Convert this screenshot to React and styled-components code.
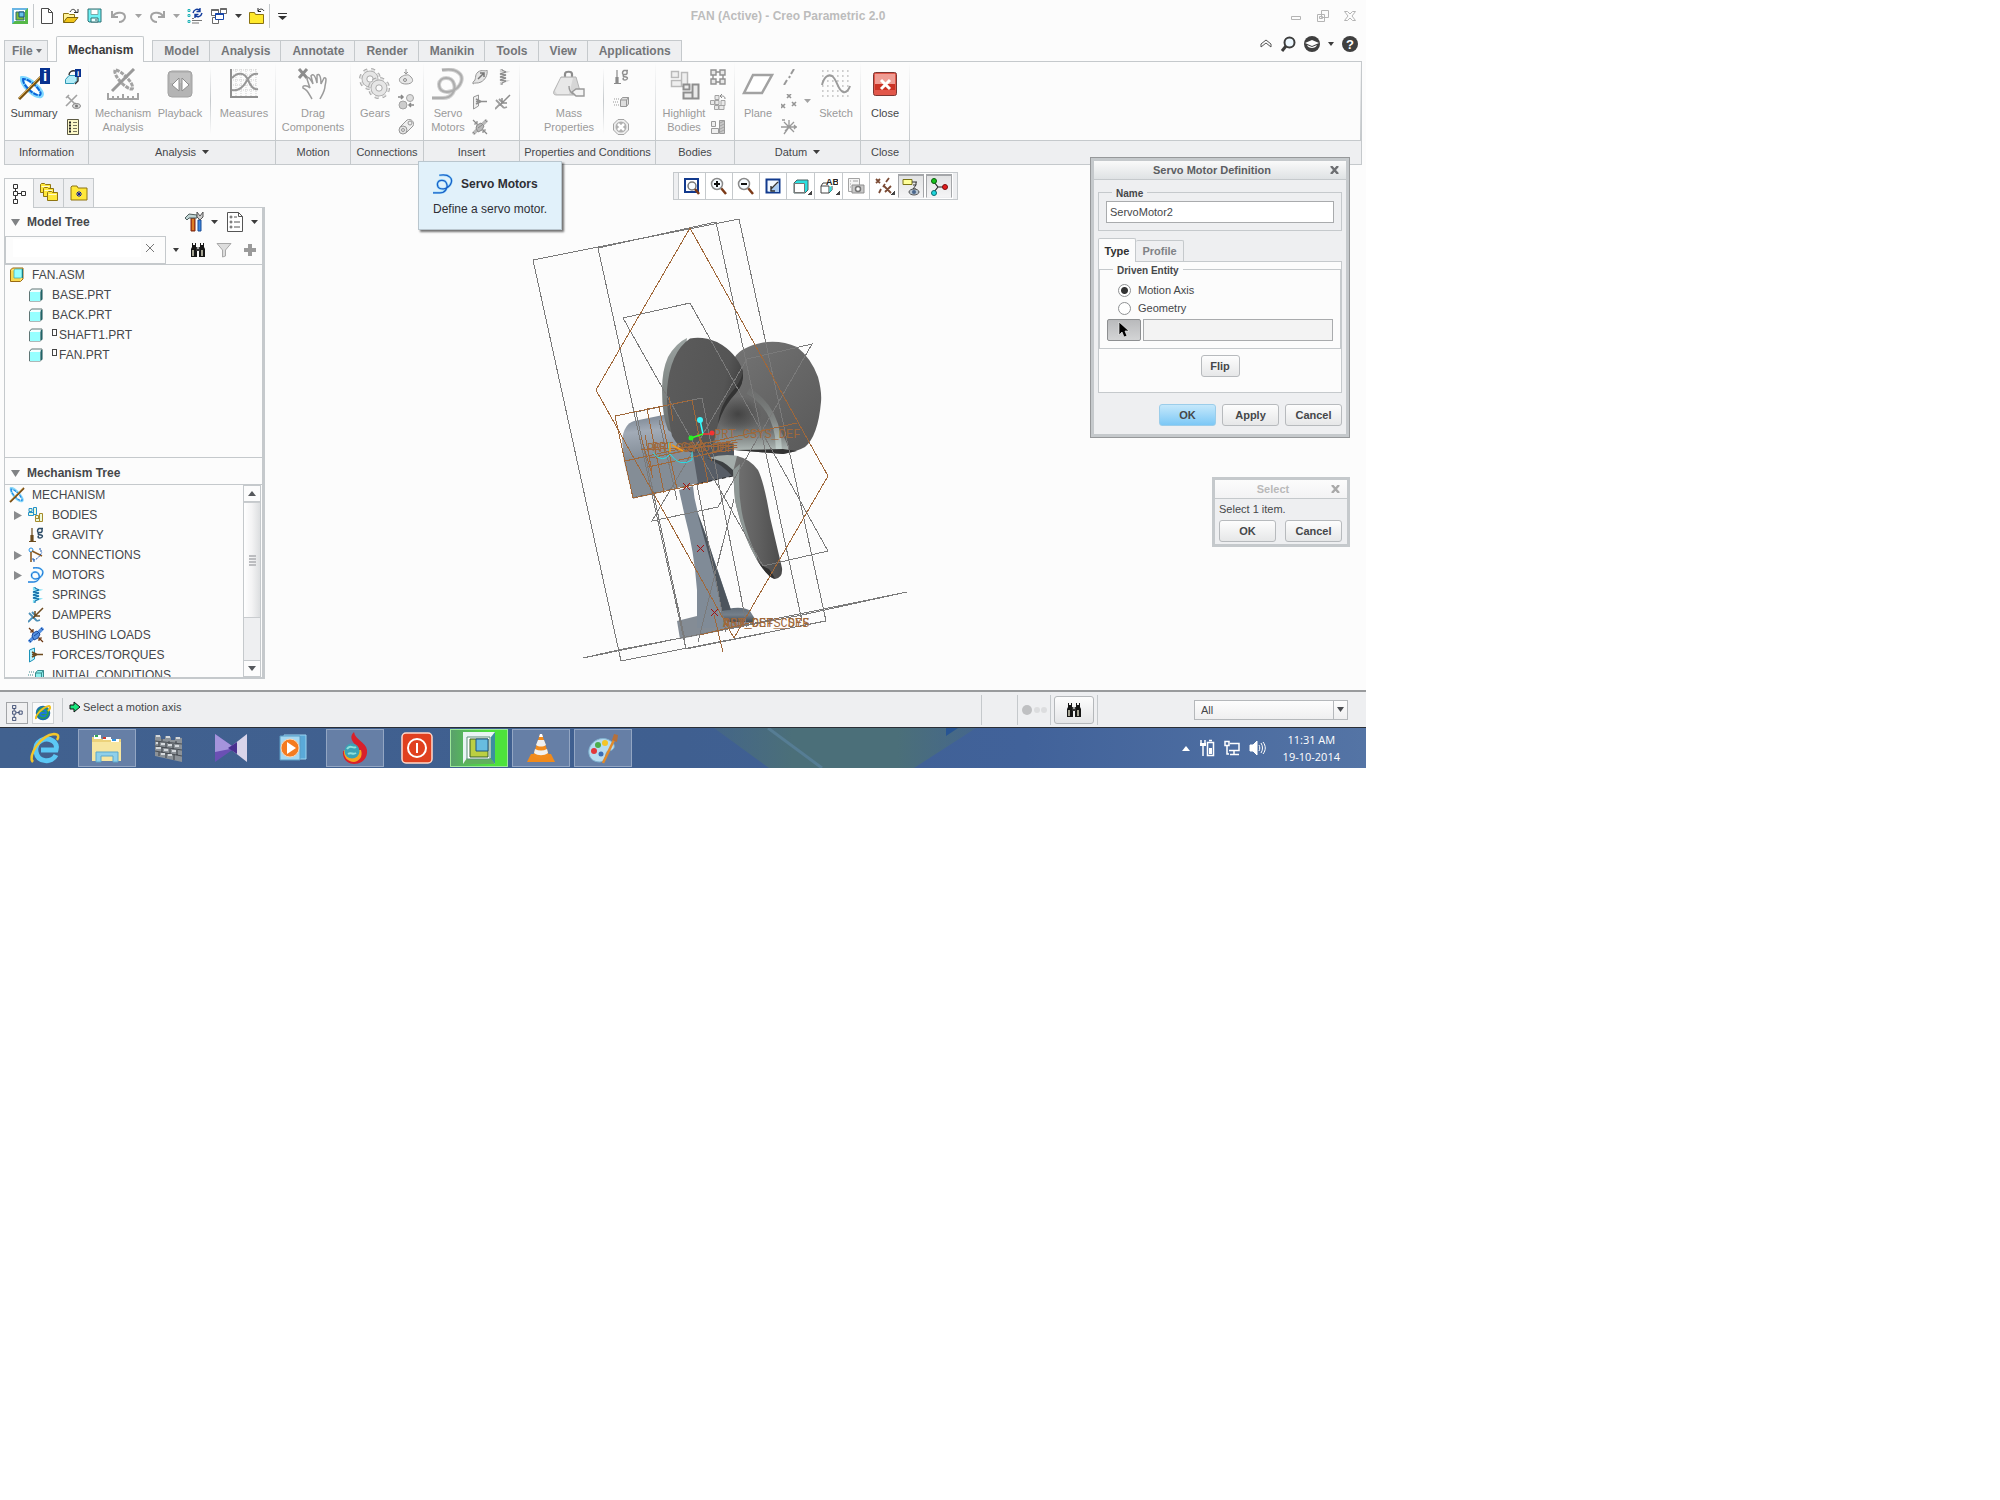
import React, { useState } from "react";
import styled, { createGlobalStyle, css } from "styled-components";

const cores = {
    fundo: "#fcfcfc",
    faixa: "#eeeff1",
    linha: "#c5c9cc",
    texto: "#45474a",
    apagado: "#9a9a9a",
    cinza: "#a3a3a3",
};

const GlobalStyle = createGlobalStyle`
    * { box-sizing: border-box; }
    body {
        margin: 0;
        background: #ffffff;
        font-family: "Liberation Sans", Arial, sans-serif;
        font-size: 11px;
        color: ${cores.texto};
    }
    button, input, select { font: inherit; color: inherit; }
    button { border: 0; padding: 0; background: none; }
    ul { list-style: none; margin: 0; padding: 0; }
    svg { display: block; flex: none; }
`;

/* ---------- icons ---------- */

const Icone = ({ s = 16, children, ...resto }) => (
    <svg width={s} height={s} viewBox={`0 0 ${s} ${s}`} fill="none" stroke={cores.cinza} {...resto}>
        {children}
    </svg>
);

const Seta = ({ cor = "#3c3c3c", w = 7, h = 4 }) => (
    <svg width={w} height={h} viewBox="0 0 7 4" preserveAspectRatio="none"><path d="M0 0H7L3.5 4Z" fill={cor} /></svg>
);

const Binoculo = ({ s = 16 }) => (
    <svg width={s} height={s} viewBox="0 0 16 16">
        <path d="M2 1h1v2h2V1h1v4h1v10H1V7l1-2ZM10 1h1v2h2V1h1v4l1 2v8H9V5h1Z" fill="#161616" />
        <path d="M6 5h4v4H6Z" fill="#333" />
        <path d="M3 8v6M12 8v6" stroke="#d3d2bd" strokeWidth="1.500" />
        <path d="M7 5l2 2M9 5L7 7" stroke="#bbb" strokeWidth="0.8" />
    </svg>
);

const Espiral = ({ s = 32, a = "#adadad", b = "#d0d0d0" }) => {
    const d = "M0 30H11C20 30 24 22 22 16C20 8 8 8 7 16C7 24 14 25 20 23C30 19 32 9 27 5C23 1 16 1 10 2";
    return (
        <svg width={s} height={s} viewBox="0 0 32 32" fill="none">
            <path d={d} stroke={b} strokeWidth="4" />
            <path d={d} stroke={a} strokeWidth="2" />
        </svg>
    );
};

const Mecanismo = ({ s = 16, cor = "#1f8ae6", claro = "#8cd8f7", eixo = "#7b4d14" }) => (
    <svg width={s} height={s} viewBox="0 0 16 16" fill="none">
        <path d="M2 1C1 6 9 15 13 14C16 12 6 1 2 1Z" stroke={claro} strokeWidth="2.4" />
        <path d="M2 2C2 7 9 14 13 13.500C14 11 6 2 2 2Z" stroke={cor} strokeWidth="1.200" strokeDasharray="3 1" />
        <path d="M1 15L15 1" stroke={eixo} strokeWidth="1.900" />
        <path d="M1 14L14 1" stroke="#d8b45c" strokeWidth="0.6" />
    </svg>
);

const Letra = ({ children, ...p }) => (
    <text stroke="none" fontFamily="Liberation Sans, Arial, sans-serif" fontWeight="bold" {...p}>{children}</text>
);

const Peca = () => (
    <Icone s={14}>
        <path d="M.5 3.500L2.500 1h10.500v10l-1.500 2H.5Z" fill="#f4ffff" stroke="#5f7575" />
        <path d="M1 4h10v9H1Z" fill="#96ffff" stroke="none" />
        <path d="M11.500 3.500V13" stroke="#7fa5a5" />
        <path d="M12.500 2v10" stroke="#1f6468" strokeWidth="1.500" />
    </Icone>
);

const Montagem = () => (
    <Icone s={16}>
        <path d="M1.500 3L3.500 1H14v11l-2.500 2.500h-10Z" fill="#ffe169" stroke="#9a6a12" />
        <path d="M2 4h3v7h6v3H2Z" fill="#f9d94e" stroke="none" />
        <path d="M5 3L6.500 2H13v8l-1.500 1H5Z" fill="#96ffff" stroke="#3aa6a6" strokeWidth="0.7" />
        <path d="M13.500 2v9" stroke="#1b7b84" />
    </Icone>
);

const Arvore = ({ cor = "#333", s = 16 }) => (
    <Icone s={s} stroke={cor} viewBox="0 0 16 20">
        <path d="M4.500 4v3M4.500 12v3M7 9.500h4M2.500.5h4v4h-4ZM2.500 7.500h4v4h-4ZM2.500 15.500h4v4h-4ZM10.500 7.500h4v4h-4Z" />
    </Icone>
);

const Pasta = ({ x = 0, y = 0 }) => (
    <g transform={`translate(${x} ${y})`}>
        <path d="M.5 9.500V1.500l1-1h3l1 1h5v8Z" fill="#ffe83a" stroke="#8f7411" />
        <path d="M1.500 3.500h8" stroke="#fffbd0" />
    </g>
);

const Mola = ({ cor, claro }) => (
    <Icone s={16}>
        <path d="M6 0v2l5 1-6 2 6 1-6 2 6 1-6 2 6 1-5 2v2" stroke={claro} strokeWidth="2.200" />
        <path d="M7 0v1l4 2-6 2 6 1-6 2 6 1-6 2 6 1-4 2v2" stroke={cor} />
    </Icone>
);

const Gravidade = ({ a, b }) => (
    <Icone s={16}>
        <path d="M4 1v13M1 14.500h7M3 8v6M5 8v6" stroke={a} strokeWidth="1.200" />
        <path d="M15 1.500h-4c-2 1-2 4 0 4h2c2-1 1-4 0-4M11 6c-2 1 0 2 2 2s2 3-1 3-2-2-1-2" stroke={b} strokeWidth="1.500" />
    </Icone>
);

const Amortecedor = ({ a, b }) => (
    <Icone s={16}>
        <path d="M0 15L5 10M2 7l7 7M4 5l4 4M2 7l-1-1M9 14l3-1" stroke={a} strokeWidth="1.800" />
        <path d="M5 11l3-3L15 1M7 4v5h5" stroke={b} strokeWidth="1.500" />
    </Icone>
);

const Bucha = ({ a, b, c }) => (
    <Icone s={16}>
        <path d="M1 15L15 1" stroke={b} strokeWidth="3.500" />
        <path d="M5 6l4-2 3 3-2 4-4 2-2-4Z" fill={b} stroke={a} />
        <path d="M6 9l4-3M1 13l2 2M13 1l2 2" stroke={a} />
        <path d="M1 1l4 4M5 2v3H2M15 15l-4-4M11 14v-3h3" stroke={c} strokeWidth="1.200" />
    </Icone>
);

const Forca = ({ a, b, c }) => (
    <Icone s={16}>
        <path d="M1.500 3L6.500 1v11l-5 3Z" fill={b} stroke={a} />
        <path d="M4 7.500h11M4 5l5 2.500L4 10" stroke={c} strokeWidth="1.700" />
    </Icone>
);

const Corpos = ({ a, b, c }) => (
    <Icone s={16}>
        <path d="M1 1.500h3v3H1ZM5.500.5h3v7h-3ZM.5 5.500h5v3h-5Z" stroke={a} fill={b} />
        <path d="M7.500 8.500h3v3h-3ZM11.500 6.500h3v8h-3ZM7.500 11.500h4v3h-4Z" stroke={c} fill={b} />
    </Icone>
);

const Velocidade = ({ a, b }) => (
    <Icone s={16}>
        <path d="M1 5h1M3 5h1M5 5h1M0 8h1M2 8h1M4 8h1M1 11h1M3 11h1M5 11h1" stroke={a} />
        <path d="M7.500 6L9.500 3.500h6V10l-2 2.500h-6Z" fill={b} stroke={a} />
        <path d="M13.500 12.500V6h-6M13.500 6l2-2.500" stroke={a} />
    </Icone>
);

const Conexoes = () => (
    <Icone s={16}>
        <circle cx="3" cy="3" r="2" stroke="#2591e8" />
        <path d="M3 5v10M4 4l10 5" stroke="#8a5a22" strokeWidth="1.600" />
        <path d="M5 13c4 0 7-4 9-8M12 1v3h3M5 11v3h3" stroke="#1956b0" strokeDasharray="2 1" />
    </Icone>
);

const Engrenagem = ({ cx, cy, r }) => (
    <g>
        <circle cx={cx} cy={cy} r={r + 1} stroke="#a8a8a8" strokeWidth="4" strokeDasharray="3.600 3.600" />
        <circle cx={cx} cy={cy} r={r + 1} stroke="#e4e4e4" strokeWidth="2" strokeDasharray="3.600 3.600" />
        <circle cx={cx} cy={cy} r={r} fill="#e6e6e6" stroke="#b3b3b3" />
        <circle cx={cx} cy={cy} r={r / 2.5} fill="#fcfcfc" stroke="#a8a8a8" />
    </g>
);

const IconeBarra = {
    novo: <Icone stroke="#4a4a4a"><path d="M2.500.5h7l4 4v11h-11Z" fill="#fff" /><path d="M9.500.5v4h4" /></Icone>,
    abrir: (
        <Icone>
            <path d="M.5 14.500V5.500h5l1 1h5v3" fill="#fff29a" stroke="#8c7412" />
            <path d="M.5 14.500L4 9.500h11l-4 5Z" fill="#f0c419" stroke="#7d650c" />
            <path d="M7 4c2-4 5-3 6 0M15 1v3.500h-4" stroke="#333" />
        </Icone>
    ),
    salvar: (
        <Icone>
            <path d="M1 1h13v13H2L1 13Z" fill="#6ff2f5" stroke="#2c6e72" />
            <path d="M4 1.500h7v5H4Z" fill="#fff" stroke="#7aa" />
            <path d="M4 10h7v4H4Z" fill="#e9ffff" stroke="#2c6e72" />
            <path d="M9 11v2" stroke="#1b5b5f" />
        </Icone>
    ),
    desfazer: <Icone><path d="M1 3v6h6M2 8C5 3 14 4 14 9c0 3-3 5-6 5" strokeWidth="2" /></Icone>,
    refazer: <Icone><path d="M15 3v6H9M14 8C11 3 2 4 2 9c0 3 3 5 6 5" strokeWidth="2" /></Icone>,
    regenerar: (
        <Icone>
            <path d="M1 1.500h2v2H1ZM1 6.500h2v2H1ZM1 12.500h2v2H1Z" stroke="#21b3b8" />
            <path d="M5 10.500h2M5 12.500h10M5 15h7" stroke="#777" />
            <path d="M6 5c1-4 5-5 7-2M13 0v3.500h-3.500M15 5c-1 4-5 5-7 2M8 10V6.500h3.500" stroke="#123c9c" strokeWidth="1.400" />
        </Icone>
    ),
    janelas: (
        <Icone stroke="#6a6a6a">
            <path d="M.5 1.500h7v6h-7ZM9.500.5h6v5h-6ZM1.500 9.500h6v6h-6Z" fill="#fff" /><path d="M.5 2h7M9.500 1h6" strokeWidth="2" />
            <path d="M4.500 5.500h8v6h-8Z" fill="#fff" stroke="#1746a8" /><path d="M4.500 6h8" stroke="#1746a8" strokeWidth="2" />
        </Icone>
    ),
    fechar: (
        <Icone>
            <path d="M.5 15.500V4.500h5l1 2h8v9Z" fill="#ffe92c" stroke="#8a7312" />
            <path d="M9 3c2-3 5-2 6 0M9 0v3.500h3" stroke="#222" />
        </Icone>
    ),
    creo: (
        <Icone>
            <path d="M0 0h16v16H0Z" fill="#55b848" stroke="none" />
            <path d="M0 0h16L0 16Z" fill="#69b5e4" stroke="none" />
            <path d="M2 2h11v11H2Z" fill="#fff" stroke="none" />
            <path d="M4 4h8v8H4Z" fill="#7dbb3a" stroke="#2c6b7b" />
            <path d="M7 4h5v5H7Z" fill="#67c1ea" stroke="#17517d" />
        </Icone>
    ),
};

const grande = {
    resumo: (
        <Icone s={32}>
            <path d="M4 10C3 17 17 30 23 28C28 24 11 9 4 10Z" stroke="#7fd8ff" strokeWidth="4" />
            <path d="M5 11C4 17 17 29 22 27C26 24 11 10 5 11Z" stroke="#0b62d8" strokeWidth="2" strokeDasharray="5 1" />
            <path d="M1 31L23 9" stroke="#77500f" strokeWidth="3" />
            <path d="M1 30L22 9" stroke="#d7a94c" strokeWidth="1" />
            <path d="M22 0h10v16H22Z" fill="#07318f" stroke="none" />
            <Letra x="25" y="13" fontSize="15" fill="#fff">i</Letra>
        </Icone>
    ),
    analise: (
        <Icone s={32}>
            <path d="M8 2C6 8 20 22 25 21C29 17 13 1 8 2Z" strokeWidth="3" strokeDasharray="4 1" />
            <path d="M5 23L27 1" stroke="#999" strokeWidth="3" />
            <path d="M1 25v6h30v-6M6 28v3M11 28v3M16 26v5M21 28v3M26 28v3" strokeWidth="2" />
        </Icone>
    ),
    tocar: (
        <Icone s={32}>
            <rect x="4" y="3" width="24" height="26" rx="4" fill="#b4b4b4" stroke="#a2a2a2" />
            <path d="M6 5h20v10H6Z" fill="#c2c2c2" stroke="none" />
            <path d="M15 10v13l-7-6ZM18 10v13l7-6Z" fill="#fff" stroke="#8d8d8d" />
        </Icone>
    ),
    medidas: (
        <Icone s={32}>
            <path d="M5 2h24M5 7h24M5 12h24M5 17h24M5 22h24M8 1v28M13 1v28M18 1v28M23 1v28M28 1v28" stroke="#cfcfcf" strokeDasharray="1 1" />
            <path d="M3 1v28h27" strokeWidth="2" stroke="#8f8f8f" />
            <path d="M4 10C10 3 17 5 20 12S26 22 30 21M4 22c6 1 10-1 14-8S26 5 30 6" stroke="#979797" strokeWidth="2" />
        </Icone>
    ),
    arrastar: (
        <Icone s={32}>
            <path d="M2 1l8 9M10 1L2 10" stroke="#8e8e8e" strokeWidth="3" />
            <path d="M15 31C12 26 11 22 6 20C5 17 10 17 13 20L10 11C11 8 13 10 16 16L14 8C16 5 18 7 20 15V7C22 5 24 8 24 16L27 10C30 9 29 13 28 18C28 23 25 27 23 31" fill="#fcfcfc" stroke="#9b9b9b" strokeWidth="1.500" />
        </Icone>
    ),
    engrenagens: <Icone s={32}><Engrenagem cx={11} cy={11} r={8} /><Engrenagem cx={20} cy={20} r={8} /></Icone>,
    servo: <Espiral />,
    massa: (
        <Icone s={32}>
            <path d="M12 9V6c0-3 7-3 7 0v3" stroke="#8d8d8d" strokeWidth="2.200" />
            <path d="M8 9h15l4 14c1 3-1 4-3 4H4c-3 0-4-1-3-4Z" fill="#d6d6d6" stroke="#b3b3b3" />
            <path d="M8 10h12l-4 16H4L2 23Z" fill="#e8e8e8" stroke="none" />
            <path d="M16 18c0 4 1 6 4 8M19 24l4-3h8v7h-8Z" fill="#f4f4f4" stroke="#999" strokeWidth="1.400" />
        </Icone>
    ),
    destacar: (
        <Icone s={32}>
            <path d="M3.500 3.500h7v6h-7ZM13.500 4.500h6v14h-6ZM3.500 12.500h10v6h-10Z" fill="#efefef" stroke="#bababa" strokeWidth="1.500" />
            <path d="M15.500 16.500h6v5h-6ZM24.500 16.500h6v14h-6ZM15.500 24.500h9v6h-9Z" fill="#eaeaea" stroke="#8e8e8e" strokeWidth="2" />
        </Icone>
    ),
    plano: <Icone s={32}><path d="M11 7h19L20 25H2Z" fill="#fff" stroke="#a2a2a2" strokeWidth="2.500" /></Icone>,
    esboco: (
        <Icone s={32}>
            <path d="M2 3h28M2 8h28M2 13h28M2 18h28M2 23h28M2 28h28" stroke="#bdbdbd" strokeWidth="1.600" strokeDasharray="1.600 3.400" />
            <path d="M2 17C4 9 8 6 12 8C17 11 18 23 23 24C27 25 29 21 30 18" strokeWidth="2" stroke="#9b9b9b" />
        </Icone>
    ),
    sair: (
        <Icone s={32}>
            <rect x="4.500" y="4.500" width="23" height="23" rx="2" fill="#e2574a" stroke="#7c3733" />
            <path d="M6 6h20v10H6Z" fill="#ef9d94" stroke="none" /><path d="M6 16h20v6H6Z" fill="#cb3325" stroke="none" />
            <path d="M12 12l9 9M21 12l-9 9" stroke="#fff" strokeWidth="3" />
        </Icone>
    ),
};

const pequeno = {
    infoCorpo: (
        <Icone>
            <path d="M.5 10.500L4 6.500h8v5l-3 3H.5Z" fill="#b4edf8" stroke="#2f98b4" /><path d="M4 6c0-3 3-5 6-4M13 8v4l-3 3" stroke="#333" strokeWidth="1.400" />
            <path d="M10 0h6v8h-6Z" fill="#07318f" stroke="none" /><Letra x="12" y="7" fontSize="8" fill="#fff">i</Letra>
        </Icone>
    ),
    olhoMec: (
        <Icone>
            <path d="M2 2l9 9M1 12L12 1M1 4l3-3M8 12l3-3" strokeWidth="1.700" />
            <ellipse cx="11.500" cy="12" rx="4" ry="2.500" fill="#ddd" stroke="#888" /><circle cx="11.500" cy="12" r="1.500" fill="#777" stroke="none" />
        </Icone>
    ),
    lista: (
        <Icone>
            <path d="M2.500.5h11v15h-11Z" fill="#fdf9c8" stroke="#5d5a44" />
            <path d="M4 3.500h2M4 6.500h2M4 9.500h2M4 12.500h2" stroke="#222" strokeWidth="2" /><path d="M8 3.500h4M8 6.500h4M8 9.500h4M8 12.500h4" stroke="#77745c" />
        </Icone>
    ),
    came: <Icone><path d="M8 0v5M6 3l2 2 2-2M3 8C0 10 1 15 8 15s8-4 5-7-3-2-5-2-3 1-5 2Z" fill="#e8e8e8" stroke="#989898" /><circle cx="7" cy="11" r="1.500" stroke="#8c8c8c" /></Icone>,
    contato: <Icone><path d="M0 3h5M3 1l2 2-2 2M16 11h-5M13 9l-2 2 2 2" stroke="#888" strokeWidth="1.500" /><circle cx="12" cy="4" r="3.500" fill="#ddd" /><circle cx="5" cy="11" r="4" fill="#ccc" /></Icone>,
    correia: <Icone stroke="#979797"><path d="M2 8L9 1c4-2 8 2 6 6l-7 7" fill="#eee" /><circle cx="5" cy="11" r="4" fill="#e3e3e3" /><circle cx="5" cy="11" r="1.500" /><circle cx="12" cy="4" r="2" /></Icone>,
    forcaMotor: <Icone stroke="#979797"><path d="M1 13c4-2 1-7 5-10s8 0 9-2c1 5-2 10-6 12s-6 0-8 2Z" fill="#e4e4e4" /><path d="M6 10l6-6M8 4h4v4" stroke="#777" strokeWidth="1.500" /></Icone>,
    forca: <Forca a="#979797" b="#efefef" c="#8f8f8f" />,
    bucha: <Bucha a="#8a8a8a" b="#b9b9b9" c="#8a8a8a" />,
    mola: <Mola cor="#858585" claro="#d4d4d4" />,
    amortecedor: <Amortecedor a="#9e9e9e" b="#8d8d8d" />,
    gravidade: <Gravidade a="#8a8a8a" b="#8f8f8f" />,
    velocidade: <Velocidade a="#979797" b="#dedede" />,
    terminar: <Icone><path d="M5 .5h6L15.500 5v6L11 15.500H5L.5 11V5Z" fill="#eee" /><circle cx="8" cy="8" r="5.500" fill="#b0b0b0" stroke="none" /><path d="M5 5l6 6M11 5l-6 6" stroke="#fff" strokeWidth="2.500" /></Icone>,
    blocos: <Icone><path d="M1 1h5v5H1ZM10 1h5v5h-5ZM1 10h5v5H1ZM10 10h5v5h-5ZM6 3h4M6 13h4M3 6v4M13 6v4" stroke="#909090" fill="#e8e8e8" strokeWidth="1.400" /></Icone>,
    reorganizar: <Icone><path d="M5 1.500h4v4H5ZM.5 6.500h4v4h-4ZM5 6.500h4v4H5ZM4.500 11.500h4v4h-4ZM9 11.500h5v4H9ZM11 6.500h4v5h-4Z" fill="#e8e8e8" /><path d="M15 5c0-3-2-3-4-3M12 0l-2 2 2 2" stroke="#888" /></Icone>,
    hachura: <Icone><path d="M1.500 2.500h4v5h-4ZM1.500 9.500h7v5h-7Z" fill="#eee" stroke="#999" /><path d="M9.500 1.500h5v13h-5Z" fill="#c8c8c8" stroke="#999" /><path d="M10 4l4-2M10 7l4-2M10 10l4-2M10 13l4-2" /></Icone>,
    eixo: <Icone><path d="M13 0l-3 5M9 7L8 9M6 11l-3 5" stroke="#999" strokeWidth="2" /></Icone>,
    pontos: <Icone stroke="#959595"><path d="M6 0l4 4M10 0L6 4M0 10l4 4M4 10l-4 4M11 8l4 4M15 8l-4 4" strokeWidth="1.600" /></Icone>,
    csys: <Icone stroke="#999"><path d="M8 8H0M8 8L3 15M8 8h8M8 8V1M3 3l10 10M13 3L4 12M1 1l3 0M13 6l2 2-2 2" strokeWidth="1.300" /></Icone>,
};

const icArvore = {
    bodies: <Corpos a="#2591c8" b="#eef9d8" c="#a58a2c" />,
    gravity: <Gravidade a="#6b4a1c" b="#2b4a66" />,
    connections: <Conexoes />,
    motors: <Espiral s={16} a="#1668d0" b="#8dd5fa" />,
    springs: <Mola cor="#1266a4" claro="#7fe0f5" />,
    dampers: <Amortecedor a="#4b8fb8" b="#6d4a1e" />,
    bushing: <Bucha a="#1b4a9c" b="#5590e0" c="#6b3510" />,
    forces: <Forca a="#1c93b8" b="#b9f1fb" c="#6d4a1e" />,
    initial: <Velocidade a="#3a8a8c" b="#8df1ee" />,
};

const lupa = (meio) => (
    <Icone s={18} stroke="#555">
        <path d="M11 11l5 6" stroke="#7c3a18" strokeWidth="2.500" />
        <circle cx="7" cy="7" r="5.500" fill="#f6fbff" stroke="#8a8a8a" strokeWidth="1.500" />
        <path d={meio} stroke="#111" strokeWidth="2" />
    </Icone>
);

const ferramentasVista = [
    { nome: "Refit", icone: <Icone s={18}><path d="M2 2h13v13H2Z" fill="#fff" stroke="#123a8e" strokeWidth="2" /><circle cx="9" cy="9" r="4" fill="#f6fbff" stroke="#777" strokeWidth="1.500" /><path d="M12 12l4 5" stroke="#7c3a18" strokeWidth="2.500" /></Icone> },
    { nome: "Zoom In", icone: lupa("M4 7h6M7 4v6") },
    { nome: "Zoom Out", icone: lupa("M4 7h6") },
    { nome: "Repaint", icone: <Icone s={18}><path d="M2.500 2.500h13v13h-13Z" fill="#f2f8ff" stroke="#123a8e" strokeWidth="2" /><path d="M4 15L15 6v9Z" fill="#a9cbf2" stroke="none" /><path d="M7 12l7-7M7 9v5h4" stroke="#333" strokeWidth="1.400" /></Icone> },
    { nome: "Display Style", canto: true, icone: <Icone s={18}><path d="M2 6l3-3h11v10l-3 3H2Z" fill="#2ae0e0" stroke="#4c6060" /><path d="M2.500 6.500h10v9h-10Z" fill="#fff" stroke="#777" /></Icone> },
    { nome: "Saved Orientations", canto: true, icone: <Icone s={18}><path d="M1 9l2-3h5M1 9v7h8V9ZM9 16l3-3V9" stroke="#444" fill="#fff" /><path d="M9.500 9.500h2v4l-2 2Z" fill="#2ae0e0" stroke="none" /><Letra x="6" y="8" fontSize="9" fill="#222">AB</Letra></Icone> },
    { nome: "View Manager", icone: <Icone s={18}><path d="M1.500 1.500h11v13h-11Z" fill="#f5f5f5" /><path d="M3 4h1M6 4h5M3 7h1M3 10h1" /><path d="M5 8h12v8H5Z" fill="#c9c9c9" stroke="#8f8f8f" /><circle cx="11" cy="12" r="2.500" fill="#fff" stroke="#777" strokeWidth="1.500" /></Icone> },
    { nome: "Datum Display Filters", canto: true, icone: <Icone s={18} stroke="#7a4a34"><path d="M1 2l4 4M5 2L1 6M14 1l-3 4M10 7l-2 3M6 12l-2 4M9 9l7 7M16 9l-6 6" strokeWidth="1.800" /></Icone> },
    { nome: "Annotation Display", ativo: true, icone: <Icone s={18}><path d="M1 1.500h9v5H1Z" fill="#ffff9a" stroke="#7a7414" /><path d="M10 4h5M14 4v3M11 7h3l-3 4h3" stroke="#333" /><ellipse cx="12" cy="14" rx="5" ry="3" fill="#b7c4d0" stroke="#555" /><circle cx="12" cy="14" r="2" fill="#4a668c" stroke="none" /></Icone> },
    { nome: "Spin Center", ativo: true, icone: <Icone s={18}><path d="M4 4l4 5h7M8 9l-4 5" stroke="#222" strokeWidth="1.200" /><circle cx="4" cy="3" r="2.500" fill="#16c41a" stroke="#0a5c0c" /><circle cx="15" cy="9" r="2.500" fill="#e41c1c" stroke="#7a0c0c" /><circle cx="4" cy="15" r="2.500" fill="#1ed7dd" stroke="#0c6a70" /></Icone> },
];

/* ---------- window frame ---------- */

const Janela = styled.div`
    position: relative;
    width: 100%;
    max-width: 1366px;
    background: ${cores.fundo};
`;
const BarraTitulo = styled.header`
    display: flex;
    align-items: center;
    height: 32px;
    padding: 0 3px 0 8px;
`;
const BotaoIcone = styled.button`
    display: flex;
    align-items: center;
    justify-content: center;
    width: ${({ $w }) => $w || 24}px;
    height: 24px;
`;
const Divisor = styled.span`
    width: 1px;
    height: ${({ $h }) => $h || 24}px;
    margin: 0 ${({ $m }) => $m || 0}px;
    background: ${cores.linha};
`;
const Titulo = styled.h1`
    flex: 1;
    margin: 0;
    text-align: center;
    font-size: 12px;
    color: #bcbcbc;
`;

const Abas = styled.nav`
    display: flex;
    align-items: flex-end;
    height: 29px;
    padding: 0 4px;
`;
const Aba = styled.button`
    height: 21px;
    padding: 0 10px 0 11px;
    border: 1px solid ${cores.linha};
    border-width: 1px 1px 0 0;
    background: ${cores.faixa};
    font-size: 12px;
    font-weight: bold;
    color: #747679;
`;
const AbaArquivo = styled(Aba)`
    display: flex;
    align-items: center;
    gap: 3px;
    width: 44px;
    padding: 0 0 0 7px;
    margin-right: 8px;
    border-left-width: 1px;
`;
const AbaAtiva = styled(Aba)`
    position: relative;
    height: 26px;
    margin: 0 8px -1px 0;
    border-left-width: 1px;
    border-radius: 2px 2px 0 0;
    background: ${cores.fundo};
    color: #3a3a3a;
`;
const Conjunto = styled.div`
    display: flex;
    border-left: 1px solid ${cores.linha};
`;
const Ajuda = styled.div`
    display: flex;
    align-items: center;
    margin-left: auto;
    padding-bottom: 5px;
`;

const Faixa = styled.section`
    display: flex;
    margin: 0 4px;
    border: 1px solid ${cores.linha};
`;
const Grupo = styled.div`
    display: flex;
    flex-direction: column;
    flex: ${({ $w }) => ($w ? `0 0 ${$w}px` : "1")};
`;
const GrupoCorpo = styled.div`
    display: flex;
    height: 78px;
    padding-left: ${({ $pad }) => $pad || 0}px;
    background: linear-gradient(${cores.fundo}, ${cores.linha}) right / 1px 100% no-repeat;
`;
const GrupoNome = styled.div`
    display: flex;
    align-items: center;
    justify-content: center;
    gap: 6px;
    height: 24px;
    padding-bottom: 2px;
    border: solid ${cores.linha};
    border-width: 1px 1px 0 0;
    background: ${cores.faixa};
    white-space: nowrap;
    ${Grupo}:last-child & { border-right: 0; }
`;
const Ferramenta = styled.button`
    display: flex;
    flex-direction: column;
    align-items: center;
    gap: 6px;
    width: ${({ $w }) => $w}px;
    padding-top: 6px;
    line-height: 14px;
    color: ${({ disabled }) => (disabled ? cores.apagado : cores.texto)};
`;
const Pequenos = styled.div`
    display: grid;
    grid-auto-flow: column;
    grid-template-rows: repeat(3, 25px);
    grid-auto-columns: 20px;
    column-gap: 3px;
    padding-top: 2px;
`;
const BotaoPequeno = styled.button`
    display: flex;
    align-items: center;
    justify-content: center;
`;
const BotaoMenu = styled(BotaoPequeno)`
    width: 17px;
`;
const DivisorGrupo = styled.span`
    width: 1px;
    margin: 6px 7px;
    background: linear-gradient(${cores.fundo}, ${cores.linha}, ${cores.fundo});
`;

const Dica = styled.div`
    position: absolute;
    left: 418px;
    top: 161px;
    width: 144px;
    padding: 12px 14px;
    border: 1px solid #b9c6ce;
    background: #e1f1fa;
    box-shadow: 2px 2px 2px rgba(0, 0, 0, 0.55);
    font-size: 12px;
    line-height: 16px;
    color: #2e2e34;
    white-space: nowrap;
    p { margin: 7px 0 0; }
`;
const DicaTitulo = styled.div`
    display: flex;
    align-items: center;
    gap: 8px;
    font-weight: bold;
`;

/* ---------- workspace ---------- */

const Area = styled.main`
    display: flex;
`;
const Lateral = styled.aside`
    display: flex;
    flex-direction: column;
    flex: none;
    width: 265px;
    padding: 13px 0 11px 4px;
`;
const AbasLaterais = styled.div`
    display: flex;
    height: 29px;
`;
const AbaLateral = styled.button`
    display: flex;
    align-items: center;
    justify-content: center;
    position: relative;
    width: 30px;
    margin-bottom: ${({ $ativa }) => ($ativa ? "-1px" : "0")};
    border: 1px solid ${cores.linha};
    border-width: 1px 1px 0 ${({ $ativa }) => ($ativa ? "1px" : "0")};
    background: ${({ $ativa }) => ($ativa ? cores.fundo : cores.faixa)};
`;
const Painel = styled.div`
    display: flex;
    flex-direction: column;
    flex: 1;
    border: solid ${cores.linha};
    border-width: 1px 3px 2px 1px;
`;
const Cabecalho = styled.div`
    display: flex;
    align-items: center;
    height: 28px;
    padding-left: 6px;
    ${({ $fim }) => $fim && css`
        padding-top: 4px;
        border: solid ${cores.linha};
        border-width: 1px 0;
    `}
    h2 {
        flex: 1;
        margin: 0 0 0 7px;
        font-size: 12px;
    }
`;
const Busca = styled.div`
    display: flex;
    align-items: center;
    height: 29px;
    border-bottom: 1px solid ${cores.linha};
`;
const CampoBusca = styled.label`
    display: flex;
    align-items: center;
    width: 161px;
    height: 28px;
    padding: 0 4px 4px 7px;
    border: 1px solid ${cores.linha};
    input {
        flex: 1;
        min-width: 0;
        height: 18px;
        border: 0;
        background: #ffffff;
    }
    button {
        width: 20px;
        height: 16px;
        padding-left: 5px;
    }
`;
const Lista = styled.ul`
    flex: 1;
    font-size: 12px;
`;
const Item = styled.li`
    display: flex;
    align-items: center;
    gap: ${({ $raiz }) => ($raiz ? 7 : 8)}px;
    height: 20px;
    padding-left: ${({ $raiz }) => ($raiz ? 4 : 9)}px;
    white-space: nowrap;
`;
const Abre = styled.span`
    width: 8px;
    margin-right: -2px;
`;
const IconeItem = styled.span`
    display: flex;
    justify-content: center;
    width: 16px;
`;
const Marca = styled.span`
    width: 5px;
    height: 7px;
    margin: -6px -6px 0 0;
    border: 1px solid #444;
`;
const Mecanismos = styled.div`
    display: flex;
    height: 192px;
    overflow: hidden;
`;
const Rolagem = styled.div`
    display: flex;
    flex-direction: column;
    width: 18px;
    margin-right: 1px;
    border: solid ${cores.linha};
    border-width: 0 1px;
    background: ${cores.faixa};
`;
const BotaoRolagem = styled.button`
    display: flex;
    align-items: center;
    justify-content: center;
    height: 17px;
    border: solid ${cores.linha};
    border-width: 1px 0;
    background: ${cores.fundo};
`;
const Polegar = styled.div`
    display: flex;
    flex-direction: column;
    align-items: center;
    justify-content: center;
    gap: 1px;
    height: 116px;
    margin-bottom: auto;
    border: 1px solid #c9cccf;
    border-width: 1px 0;
    background: linear-gradient(90deg, #ffffff, #f3f3f4 50%, #dcdee0);
    span {
        width: 7px;
        height: 2px;
        background: #bcbdc0;
    }
`;

const Vista = styled.section`
    display: flex;
    flex-direction: column;
    flex: 1;
    min-width: 0;
    padding-top: 7px;
`;
const BarraVista = styled.div`
    display: flex;
    align-self: center;
    height: 28px;
    border: 1px solid ${cores.linha};
    background: #ffffff;
    &::before, &::after {
        content: "";
        width: 4px;
        background: ${cores.faixa};
    }
`;
const BotaoVista = styled.button`
    display: flex;
    align-items: center;
    justify-content: center;
    width: ${({ $canto }) => ($canto ? 28 : 27)}px;
    border-left: 1px solid ${cores.linha};
    ${({ $canto }) => $canto && css`
        background: linear-gradient(135deg, transparent 50%, #444 50%) right 2px bottom 4px / 4px 4px no-repeat;
    `}
    ${({ $ativo }) => $ativo && css`
        width: 26px;
        margin: 1px;
        border: 1px solid #a4a6a9;
        border-width: 2px 1px 1px;
        border-bottom-color: ${cores.faixa};
        background: linear-gradient(#e2e3e4, #f4f4f5);
    `}
`;
const Cena = styled.svg`
    width: 100%;
    height: auto;
`;

/* ---------- dialogs ---------- */

const Dialogo = styled.section`
    position: absolute;
    right: 16px;
    top: ${({ $top }) => $top}px;
    width: ${({ $w }) => $w}px;
    border: 3px solid ${cores.linha};
    background: ${cores.faixa};
    ${({ $foco }) => $foco && css`
        outline: 1px solid #96989a;
        outline-offset: -1px;
        border-width: 4px;
    `}
`;
const DialogoTitulo = styled.header`
    display: flex;
    align-items: center;
    height: 19px;
    padding-right: 7px;
    border-bottom: 1px solid ${cores.linha};
    background: ${({ $claro }) => ($claro ? "linear-gradient(#fcfcfc, #f3f3f4)" : "linear-gradient(#fafafa, #dfe2e4)")};
    color: ${({ $claro }) => ($claro ? "#b9b9b9" : "#5c5e62")};
    h2 {
        flex: 1;
        margin: 0;
        text-align: center;
        font-size: 11px;
    }
`;
const Corpo = styled.form`
    padding: 5px 4px 8px;
`;
const Quadro = styled.fieldset`
    min-width: 0;
    margin: 0;
    padding: ${({ $alto }) => $alto || 1}px 7px 7px;
    border: 1px solid ${cores.linha};
    legend {
        margin-left: 6px;
        padding: 3px 4px 0;
        font-size: 10px;
        font-weight: bold;
        line-height: 12px;
    }
`;
const Campo = styled.input`
    display: block;
    flex: 1;
    width: 100%;
    min-width: 0;
    height: 22px;
    padding: 0 3px;
    border: 1px solid #a9abad;
    background: ${({ readOnly }) => (readOnly ? "#f3f3f3" : "#ffffff")};
`;
const DialogoAbas = styled.div`
    display: flex;
    align-items: flex-end;
    height: 23px;
    margin-top: 7px;
`;
const DialogoAba = styled.button`
    position: relative;
    height: ${({ $ativa }) => ($ativa ? 24 : 21)}px;
    width: ${({ $ativa }) => ($ativa ? 38 : 48)}px;
    margin-bottom: ${({ $ativa }) => ($ativa ? -1 : 0)}px;
    border: 1px solid ${cores.linha};
    border-width: 1px 1px 0 ${({ $ativa }) => ($ativa ? 1 : 0)}px;
    border-radius: 2px 2px 0 0;
    background: ${({ $ativa }) => ($ativa ? cores.fundo : cores.faixa)};
    font-weight: bold;
    color: ${({ $ativa }) => ($ativa ? "#303030" : "#808286")};
`;
const DialogoPainel = styled.div`
    padding-bottom: 15px;
    border: 1px solid ${cores.linha};
    background: ${cores.fundo};
`;
const Opcao = styled.label`
    display: flex;
    align-items: center;
    gap: 7px;
    height: 18px;
    padding-left: 11px;
    input {
        appearance: none;
        width: 13px;
        height: 13px;
        margin: 0;
        border: 1px solid #8f9193;
        border-radius: 50%;
        background: #ffffff;
    }
    input:checked {
        background: radial-gradient(circle, #333 3px, #ffffff 4px);
    }
`;
const LinhaCampo = styled.div`
    display: flex;
    gap: 2px;
    margin-top: 2px;
`;
const Seletor = styled.button`
    display: flex;
    justify-content: center;
    align-items: center;
    width: 34px;
    height: 22px;
    border: 1px solid #8d8f91;
    border-radius: 2px;
    background: linear-gradient(#b9babc, #d3d4d5);
`;
const Botao = styled.button`
    width: ${({ $w }) => $w || 57}px;
    height: 22px;
    border: 1px solid #b7babd;
    border-radius: 3px;
    background: linear-gradient(#fdfdfd, #e6e7e8);
    font-weight: bold;
    ${({ $padrao }) => $padrao && css`
        border-color: #9bcdea;
        background: linear-gradient(#c5e8fb, #7cc8f6);
    `}
`;
const Centro = styled.div`
    display: flex;
    justify-content: center;
    margin-top: 6px;
`;
const Botoes = styled.div`
    display: flex;
    justify-content: flex-end;
    gap: 6px;
    margin-top: 11px;
`;
const BotoesSelecao = styled(Botoes)`
    justify-content: space-between;
    margin-top: 5px;
`;
const CorpoSelecao = styled.form`
    padding: 4px 5px 2px 4px;
    p { margin: 0; line-height: 12px; }
`;

/* ---------- status bar and taskbar ---------- */

const Status = styled.footer`
    display: flex;
    align-items: center;
    height: 38px;
    padding: 0 18px 0 6px;
    border-top: 2px solid #999b9d;
    border-bottom: 1px solid #2b2f36;
    background: ${cores.faixa};
`;
const BotaoStatus = styled.button`
    display: flex;
    align-items: center;
    justify-content: center;
    width: 22px;
    height: 22px;
    margin: 6px 4px 0 0;
    border: 1px solid ${({ $ativo }) => ($ativo ? "#a2a4a7" : "#cfd2d4")};
    background: ${({ $ativo }) => ($ativo ? "#f0f0f1" : "#fafafa")};
`;
const Mensagem = styled.output`
    display: flex;
    align-items: center;
    gap: 2px;
    flex: 1;
    margin-bottom: 6px;
    padding-left: 2px;
`;
const Procurar = styled.button`
    display: flex;
    align-items: center;
    justify-content: center;
    width: 40px;
    height: 28px;
    margin: 0 3px;
    border: 1px solid #b5b8bb;
    border-radius: 3px;
    background: linear-gradient(#fdfdfd, #e4e5e7);
`;
const Vazio = styled.span`
    width: 35px;
`;
const Luzes = styled.span`
    display: flex;
    justify-content: center;
    width: 32px;
`;
const Filtro = styled.label`
    display: flex;
    width: 154px;
    height: 20px;
    margin-left: 96px;
    border: 1px solid #b5b8bb;
    background: linear-gradient(#fdfdfd, #efeff0);
    select {
        flex: 1;
        appearance: none;
        padding: 0 6px;
        border: 0;
        background: transparent;
    }
    span {
        display: flex;
        align-items: center;
        justify-content: center;
        width: 14px;
        border-left: 1px solid #b5b8bb;
    }
`;

const Tarefas = styled.div`
    display: flex;
    align-items: center;
    gap: 4px;
    height: 40px;
    padding-left: 16px;
    color: #ffffff;
    overflow: hidden;
    background: linear-gradient(90deg, #41618f 0%, #3f5f90 50%, #41629a 75%, #5474a5 100%);
`;
const BotaoTarefa = styled.button`
    display: flex;
    align-items: center;
    justify-content: center;
    width: 58px;
    height: 38px;
    ${({ $aberto }) => $aberto && css`
        border: 1px solid #93a6c3;
        background: #667fa6;
    `}
    ${({ $verde }) => $verde && css`
        border: 1px solid #9de89a;
        background: linear-gradient(90deg, #5aa06c, #4de23c 70%);
    `}
`;
const PapelParede = styled.svg`
    margin-left: 78px;
`;
const Bandeja = styled.div`
    display: flex;
    align-items: center;
    gap: 9px;
    margin-left: auto;
    padding-right: 26px;
`;
const Relogio = styled.time`
    padding-left: 8px;
    text-align: center;
    font-family: "Open Sans", "Noto Sans", sans-serif;
    font-size: 11px;
    line-height: 17px;
`;

/* ---------- data ---------- */

const abas = ["Model", "Analysis", "Annotate", "Render", "Manikin", "Tools", "View", "Applications"];

const pecas = [
    { nome: "BASE.PRT" },
    { nome: "BACK.PRT" },
    { nome: "SHAFT1.PRT", marca: true },
    { nome: "FAN.PRT", marca: true },
];

const mecanismos = [
    { nome: "BODIES", icone: icArvore.bodies, abre: true },
    { nome: "GRAVITY", icone: icArvore.gravity },
    { nome: "CONNECTIONS", icone: icArvore.connections, abre: true },
    { nome: "MOTORS", icone: icArvore.motors, abre: true },
    { nome: "SPRINGS", icone: icArvore.springs },
    { nome: "DAMPERS", icone: icArvore.dampers },
    { nome: "BUSHING LOADS", icone: icArvore.bushing },
    { nome: "FORCES/TORQUES", icone: icArvore.forces },
    { nome: "INITIAL CONDITIONS", icone: icArvore.initial },
];

const tarefas = [
    {
        nome: "Internet Explorer",
        icone: (
            <svg width="32" height="32" viewBox="0 0 32 32" fill="none">
                <path d="M27 23C23 31 9 31 7 20C5 9 17 4 24 9C28 12 28 15 27 18H12" stroke="#5cc8f5" strokeWidth="5" />
                <path d="M4 30C-2 24 12 3 25 2C30 2 30 5 28 8" stroke="#f3c62b" strokeWidth="2.500" />
            </svg>
        ),
    },
    {
        nome: "File Explorer", aberto: true,
        icone: (
            <svg width="34" height="32" viewBox="0 0 34 32">
                <path d="M2 5h8l2 2h19v22H2Z" fill="#ecd27a" />
                <path d="M4 3h7v4H4ZM13 5h8v3h-8ZM21 7h8v3h-8Z" fill="#fff" />
                <path d="M5 3h3v2H5Z" fill="#2fa84f" /><path d="M13 5h3v2h-3Z" fill="#d33a2c" /><path d="M22 7h4v2h-4Z" fill="#3193dd" />
                <path d="M2 10h29v19H2Z" fill="#f7e6a0" />
                <path d="M6 30V20h22v10h-5v-6H11v6Z" fill="#8fd0ea" stroke="#5aa7cc" />
            </svg>
        ),
    },
    {
        nome: "Firewall",
        icone: (
            <svg width="32" height="30" viewBox="0 0 32 30">
                <path d="M2 2l6 1v3l4 0V3l6 1v3h4V4l7 1v24L2 23Z" fill="#8c9298" />
                <path d="M2 8l27 3M2 13l27 4M2 18l27 5M9 6v2M16 8v3M23 8v3M6 9v4M13 10v5M20 11v5M9 14v5M17 16v5M24 17v5M6 19v4M13 20v5M21 22v5" stroke="#4a4f55" strokeWidth="1.200" />
                <path d="M3 3h4M13 4h4M23 5h4M3 10h2M8 11h4M15 12h4M22 13h4M3 15h5M11 17h4M19 18h4M8 21h4M15 22h4" stroke="#d4d8dc" strokeWidth="1.800" />
            </svg>
        ),
    },
    {
        nome: "KMPlayer",
        icone: (
            <svg width="32" height="30" viewBox="0 0 32 30">
                <path d="M0 1L20 15L0 29Z" fill="#6b50b4" /><path d="M0 1L20 15L0 19Z" fill="#a594dc" />
                <path d="M32 1L14 15L32 29Z" fill="#d9d4ea" /><path d="M22 9l-9 6 9 6Z" fill="#4a3090" />
            </svg>
        ),
    },
    {
        nome: "Windows Media Player",
        icone: (
            <svg width="28" height="28" viewBox="0 0 28 28">
                <path d="M5 1h22v24H5Z" fill="#5aa9d8" stroke="#9bd3f0" /><path d="M1 2h20v24H1Z" fill="#a5d8f2" stroke="#5b9cc4" />
                <circle cx="11" cy="14" r="9" fill="#f47b20" stroke="#fbd3b0" /><path d="M8 8l9 6-9 6Z" fill="#fff" />
            </svg>
        ),
    },
    {
        nome: "Torch", aberto: true,
        icone: (
            <svg width="28" height="34" viewBox="0 0 28 34">
                <path d="M13 1C6 8 15 13 17 18L2 20C1 27 6 33 13 33C21 33 27 27 26 19C25 11 14 9 13 1Z" fill="#d8202a" />
                <path d="M3 19C2 26 7 31 13 31C19 30 22 25 20 19Z" fill="#f7a51e" />
                <circle cx="11" cy="20" r="7.500" fill="#3aa3b5" />
                <path d="M6 18c3-5 6 0 9-2M7 23c3-2 5 1 8-1" stroke="#8fe0da" strokeWidth="2" fill="none" />
            </svg>
        ),
    },
    {
        nome: "Shut Down",
        icone: (
            <svg width="32" height="32" viewBox="0 0 32 32">
                <rect x="1" y="1" width="30" height="30" rx="4" fill="#e0401f" stroke="#ffd9cc" strokeWidth="1.500" />
                <circle cx="16" cy="16" r="9" fill="none" stroke="#fff" strokeWidth="2" /><path d="M16 11v10" stroke="#fff" strokeWidth="2" />
            </svg>
        ),
    },
    {
        nome: "Creo Parametric", verde: true,
        icone: (
            <svg width="32" height="32" viewBox="0 0 32 32">
                <path d="M0 0h32v32H0Z" fill="#e9f4f4" /><path d="M0 32L4 26H28L32 32Z" fill="#5fb05c" /><path d="M32 0L28 5v22l4 5Z" fill="#3c8ea0" />
                <path d="M4 5h23v22H4Z" fill="#fff" stroke="#5d8f7a" /><path d="M7 7h18v18H7Z" fill="#bccf42" stroke="#355e2a" />
                <path d="M13 7h12v12H13Z" fill="#68bce0" stroke="#1f5580" />
            </svg>
        ),
    },
    {
        nome: "VLC media player", aberto: true,
        icone: (
            <svg width="28" height="32" viewBox="0 0 28 32">
                <path d="M4 22h20l4 8H0Z" fill="#f08a1c" /><path d="M13 2h2l7 22c-3 4-13 4-16 0Z" fill="#f28c1e" />
                <path d="M11 8h6l2 5c-3 2-7 2-10 0ZM8 17c4 2 8 2 12 0l1 4c-4 3-10 3-14 0Z" fill="#f1f1f1" /><path d="M13 2h2l1 3h-4Z" fill="#fff" />
            </svg>
        ),
    },
    {
        nome: "Paint", aberto: true,
        icone: (
            <svg width="32" height="32" viewBox="0 0 32 32">
                <path d="M2 22C0 12 12 3 22 8C31 13 27 19 21 19C17 20 21 29 13 30C7 30 3 27 2 22Z" fill="#b8dcf0" stroke="#7fb2cf" />
                <circle cx="7" cy="19" r="3" fill="#e2383b" /><circle cx="11" cy="13" r="3" fill="#4cae4a" /><circle cx="18" cy="11" r="3" fill="#f5c527" /><circle cx="14" cy="22" r="2.500" fill="#3c6db5" />
                <path d="M27 8L16 31" stroke="#e08a2b" strokeWidth="2.500" /><path d="M25 8l2-6 4 1-1 7Z" fill="#b5703a" />
            </svg>
        ),
    },
];

/* ---------- parts ---------- */

const Grande = ({ icone, w, ativo, linhas }) => (
    <Ferramenta $w={w} disabled={!ativo}>
        {grande[icone]}
        <span>{linhas.map((l, i) => <React.Fragment key={l}>{i > 0 && <br />}{l}</React.Fragment>)}</span>
    </Ferramenta>
);

const Coluna = ({ nomes }) => (
    <Pequenos>
        {nomes.map((n) => <BotaoPequeno key={n} aria-label={n}>{pequeno[n]}</BotaoPequeno>)}
    </Pequenos>
);

const GrupoFaixa = ({ nome, w, pad, menu, children }) => (
    <Grupo $w={w}>
        <GrupoCorpo $pad={pad}>{children}</GrupoCorpo>
        <GrupoNome>{nome}{menu && <Seta />}</GrupoNome>
    </Grupo>
);

const FaixaOpcoes = () => (
    <Faixa>
        <GrupoFaixa nome="Information" w={84}>
            <Grande icone="resumo" w={58} ativo linhas={["Summary"]} />
            <Coluna nomes={["infoCorpo", "olhoMec", "lista"]} />
        </GrupoFaixa>
        <GrupoFaixa nome="Analysis" w={187} menu>
            <Grande icone="analise" w={68} linhas={["Mechanism", "Analysis"]} />
            <Grande icone="tocar" w={46} linhas={["Playback"]} />
            <DivisorGrupo />
            <Grande icone="medidas" w={52} linhas={["Measures"]} />
        </GrupoFaixa>
        <GrupoFaixa nome="Motion" w={75}>
            <Grande icone="arrastar" w={74} linhas={["Drag", "Components"]} />
        </GrupoFaixa>
        <GrupoFaixa nome="Connections" w={73} pad={3}>
            <Grande icone="engrenagens" w={42} linhas={["Gears"]} />
            <Coluna nomes={["came", "contato", "correia"]} />
        </GrupoFaixa>
        <GrupoFaixa nome="Insert" w={96} pad={2}>
            <Grande icone="servo" w={44} linhas={["Servo", "Motors"]} />
            <Coluna nomes={["forcaMotor", "forca", "bucha", "mola", "amortecedor"]} />
        </GrupoFaixa>
        <GrupoFaixa nome="Properties and Conditions" w={136} pad={22}>
            <Grande icone="massa" w={54} linhas={["Mass", "Properties"]} />
            <DivisorGrupo />
            <Coluna nomes={["gravidade", "velocidade", "terminar"]} />
        </GrupoFaixa>
        <GrupoFaixa nome="Bodies" w={79} pad={4}>
            <Grande icone="destacar" w={48} linhas={["Highlight", "Bodies"]} />
            <Coluna nomes={["blocos", "reorganizar", "hachura"]} />
        </GrupoFaixa>
        <GrupoFaixa nome="Datum" w={126} pad={2} menu>
            <Grande icone="plano" w={42} linhas={["Plane"]} />
            <Coluna nomes={["eixo", "pontos", "csys"]} />
            <BotaoMenu aria-label="Datum points"><Seta cor={cores.cinza} /></BotaoMenu>
            <Grande icone="esboco" w={40} linhas={["Sketch"]} />
        </GrupoFaixa>
        <GrupoFaixa nome="Close" w={49}>
            <Grande icone="sair" w={48} ativo linhas={["Close"]} />
        </GrupoFaixa>
        <GrupoFaixa />
    </Faixa>
);

const Modelo = () => {
    const cruz = (x, y) => <path key={y} d={`M${x - 3} ${y - 3}l7 7M${x + 4} ${y - 3}l-7 7`} stroke="#a40d0d" />;
    return (
        <Cena viewBox="265 200 1101 490" role="img" aria-label="Fan assembly" fill="none">
            <defs>
                <linearGradient id="tampa" x1="0" y1="0" x2="0.2" y2="1">
                    <stop offset="0" stopColor="#737e8b" /><stop offset="0.4" stopColor="#a2abb7" /><stop offset="1" stopColor="#808a94" />
                </linearGradient>
                <linearGradient id="haste" x1="679" y1="0" x2="731" y2="-12" gradientUnits="userSpaceOnUse">
                    <stop offset="0" stopColor="#808b97" /><stop offset="0.4" stopColor="#98a4b0" /><stop offset="0.7" stopColor="#7f8a96" /><stop offset="1" stopColor="#5b646d" />
                </linearGradient>
                <linearGradient id="pa1" x1="0" y1="0" x2="1" y2="0.3">
                    <stop offset="0" stopColor="#5c5c5c" /><stop offset="0.8" stopColor="#555555" /><stop offset="1" stopColor="#444444" />
                </linearGradient>
                <linearGradient id="pa2" x1="0" y1="0" x2="1" y2="1">
                    <stop offset="0" stopColor="#777777" /><stop offset="0.5" stopColor="#676767" /><stop offset="1" stopColor="#595959" />
                </linearGradient>
                <linearGradient id="pa3" x1="0" y1="0" x2="1" y2="0">
                    <stop offset="0" stopColor="#727272" /><stop offset="0.5" stopColor="#616161" /><stop offset="1" stopColor="#4b4b4b" />
                </linearGradient>
                <linearGradient id="borda" x1="0" y1="0" x2="0" y2="1">
                    <stop offset="0" stopColor="#9ba3a1" /><stop offset="1" stopColor="#676b6a" />
                </linearGradient>
                <linearGradient id="brilho" x1="0" y1="418" x2="0" y2="452" gradientUnits="userSpaceOnUse">
                    <stop offset="0" stopColor="#5f6060" stopOpacity="0" /><stop offset="0.5" stopColor="#7b807f" /><stop offset="1" stopColor="#b4bebb" />
                </linearGradient>
                <linearGradient id="faixa" x1="0" y1="390" x2="0" y2="452" gradientUnits="userSpaceOnUse">
                    <stop offset="0" stopColor="#7d8280" stopOpacity="0.2" /><stop offset="0.5" stopColor="#8c9290" stopOpacity="0.8" /><stop offset="1" stopColor="#c8d6d2" />
                </linearGradient>
                <radialGradient id="sombra" cx="0.5" cy="0.5" r="0.5">
                    <stop offset="0" stopColor="#3a3a3a" stopOpacity="0.8" /><stop offset="1" stopColor="#3a3a3a" stopOpacity="0" />
                </radialGradient>
                <linearGradient id="pe" x1="0" y1="0" x2="0" y2="1">
                    <stop offset="0" stopColor="#626d78" /><stop offset="0.5" stopColor="#75808b" /><stop offset="1" stopColor="#444b52" />
                </linearGradient>
            </defs>

            {/* stand and base */}
            <path d="M677 621L697 616L720 612L753 622L720 631L680 639Z" fill="#848c95" />
            <path d="M719 612C730 607 744 606 750 611L755 619L753 622L728 622Z" fill="url(#pe)" />
            <path d="M679 490L693 486Q694 500 699 516L720 577L731 610L718 612Q724 622 727 628L697 628L697 590Q694 550 685 517Z" fill="url(#haste)" />
            <path d="M697 512Q705 530 714 560L731 610L722 611Q716 580 709 556Z" fill="#4d555d" />

            {/* motor housing */}
            <path d="M624 461L622 440Q624 424 634 421L668 414L700 446Z" fill="url(#tampa)" />
            <path d="M624 461L700 444L732 438L733 475L633 498Z" fill="#848d96" />
            <path d="M692 447L698 484L733 476L728 436Z" fill="#575d66" />
            <path d="M633 498L733 476" stroke="#242424" strokeDasharray="4 3" />

            {/* blades */}
            <path d="M735 357Q741 347 763 342.500Q781 340 797 347Q811 358 818 377Q822 392 821 402Q818 436 805 447Q796 452 783 454L735 450L712 452L716 420Q724 380 735 357Z" fill="url(#pa2)" />
            <path d="M720 425Q745 412 768 418Q784 430 790 453L783 453L718 449Z" fill="url(#brilho)" />
            <path d="M748 391Q772 404 778 436L779 452" stroke="url(#faixa)" strokeWidth="6" />
            <ellipse cx="738" cy="414" rx="24" ry="18" fill="url(#sombra)" />
            <path d="M735 450L783 454L797 451L783 449Z" fill="#333" />
            <path d="M687 338Q676 343 668 357Q662 370 662 390Q662 415 668 430L676 436Z" fill="url(#borda)" />
            <path d="M690 338.500Q703 336 717 342Q736 352 743 371Q744 384 736 393Q726 404 720 418Q716 430 714 440Q708 455 692 453Q678 448 672 436Q666 410 667 390Q670 352 690 338.500Z" fill="url(#pa1)" />
            <path d="M743 373Q744 384 736 393Q724 405 718 424Q720 405 731 393Q740 383 743 373Z" fill="#343434" />
            <path d="M697 449Q710 440 734 444L734 458L710 458Z" fill="#50565e" />
            <path d="M715 430h18v13h-18Z" fill="#7f8992" opacity="0.7" />
            <path d="M707 458Q722 464 733 477L738 466L724 456Z" fill="#3d4043" />
            <path d="M708 458Q724 453 738 456Q744 460 739 467L733 470Q722 459 708 458Z" fill="#a4adab" />
            <path d="M737 456Q750 459 758 470Q764 482 770 517L782 568Q783 578 775 579Q768 578 757 560Q742 534 735 500L733 472Z" fill="url(#pa3)" />
            <path d="M733 470L740 464Q737 490 743 518Q748 538 757 557L757 560Q742 534 735 500Z" fill="#8e9795" />
            <path d="M757 560Q762 567 769 569Q774 576 775 579Q768 578 757 560Z" fill="#303030" />

            {/* datum planes */}
            <g stroke="#7a7a7a" shapeRendering="crispEdges">
                <path d="M533 260L739 219L826 621L621 661Z" />
                <path d="M598 248L716 222L802 621M598 248L686 649L825 621" />
                <path d="M623 318L690 303L828 551L763 566Z" />
                <path d="M747 359L812 344L718 507L652 521Z" />
                <path d="M583 658L907 592M583 658L618 650L802 615L907 592" />
                <path d="M636 412L685 640M659 420L677 500M702 398L747 627" />
                <path d="M636 412L702 398M697 485L726 632M734 499L698 642" />
            </g>
            <g stroke="#a0683a" shapeRendering="crispEdges">
                <path d="M690 228L828 476L734 638L596 390Z" />
                <path d="M615 416L692 400L708 482L633 498Z" />
                <path d="M647 409L664 493M659 407L677 489M647 409L659 407M669 397L673 421" />
                <path d="M625 461L797 423M648 467L720 451M641 437L653 478M645 435L652 472M641 450L737 445M650 458L736 440M697 433L712 461" />
                <path d="M714 615L723 652M700 635L753 622" />
            </g>
            <g stroke="none" fill="#a0683a" fontFamily="Liberation Mono, monospace" fontSize="12">
                <text x="714" y="438">PRT_CSYS_DEF</text>
                <text x="647" y="452">PRT_CSYS_DEF</text>
                <text x="652" y="451">PRT_CSYS_DEF</text>
                <text x="723" y="627">PRT_CSYS_DEF</text>
                <text x="723" y="627">ASM_DEF_CSYS</text>
            </g>
            {cruz(686, 486)}
            {cruz(700, 548)}
            {cruz(714, 612)}

            {/* spin centre */}
            <path d="M653 453Q663 464 670 454Q680 468 692 460V452M669 442v9" stroke="#24e0e8" />
            <path d="M670 443V452M672 445L683 451" stroke="#f39a1b" strokeWidth="1.500" />
            <path d="M700 420L703 434" stroke="#3ff" strokeWidth="1.500" /><circle cx="700" cy="420" r="3" fill="#3cf6fb" />
            <path d="M703 434L691 438" stroke="#3f2" strokeWidth="1.500" /><circle cx="691" cy="438" r="2.500" fill="#27ef27" />
            <path d="M703 434H711" stroke="#f33" strokeWidth="1.500" /><circle cx="712" cy="433" r="2.500" fill="#f53232" />
        </Cena>
    );
};

const PainelLateral = () => (
    <Lateral>
        <AbasLaterais>
            <AbaLateral $ativa aria-label="Model Tree"><Arvore s={20} /></AbaLateral>
            <AbaLateral aria-label="Folder Browser">
                <svg width="20" height="20" viewBox="0 0 20 20"><Pasta x={1} y={0} /><Pasta x={4} y={4} /><Pasta x={8} y={8} /></svg>
            </AbaLateral>
            <AbaLateral aria-label="Favorites">
                <svg width="18" height="16" viewBox="0 0 18 16">
                    <path d="M1 15V2l1-1h5l1 2h9v12Z" fill="#ffe83a" stroke="#8f7411" />
                    <path d="M9 6v6M6 9h6M7 7l4 4M11 7l-4 4" stroke="#0c1a9c" />
                </svg>
            </AbaLateral>
        </AbasLaterais>
        <Painel>
            <Cabecalho>
                <Seta cor="#808284" w={9} h={7} />
                <h2>Model Tree</h2>
                <BotaoIcone $w={20} aria-label="Settings">
                    <Icone s={20}>
                        <path d="M7 6h4v13H7Z" fill="#c4481c" stroke="#7a2c10" /><path d="M9 7v11" stroke="#f4b52c" />
                        <path d="M1 6l4-4 8 1v3H5L3 8Z" fill="#bfd4d4" stroke="#4f5f5f" />
                        <path d="M14 8h3v11h-3Z" fill="#3a86e0" stroke="#1a4c94" /><path d="M13 0l0 5 3 3 3-3V0l-3 4Z" fill="#ccc" stroke="#555" />
                    </Icone>
                </BotaoIcone>
                <BotaoIcone $w={20} aria-label="Settings menu"><Seta /></BotaoIcone>
                <BotaoIcone $w={22} aria-label="Show">
                    <Icone s={20} stroke="#555">
                        <path d="M2.500.5h11l4 4v15h-15Z" fill="#fff" /><path d="M13.500.5v4h4" />
                        <path d="M9 5h3M9 10h6M9 15h6" /><circle cx="6" cy="5" r="1" /><circle cx="6" cy="10" r="1" /><circle cx="6" cy="15" r="1" />
                    </Icone>
                </BotaoIcone>
                <BotaoIcone $w={16} aria-label="Show menu"><Seta /></BotaoIcone>
            </Cabecalho>
            <Busca>
                <CampoBusca>
                    <input aria-label="Search the model tree" />
                    <button aria-label="Clear"><svg width="8" height="8" viewBox="0 0 8 8"><path d="M0 0l8 8M8 0L0 8" stroke="#777" /></svg></button>
                </CampoBusca>
                <BotaoIcone $w={20} aria-label="Search options"><Seta w={6} /></BotaoIcone>
                <BotaoIcone aria-label="Find"><Binoculo /></BotaoIcone>
                <BotaoIcone $w={28} aria-label="Filter"><Icone s={16}><path d="M1 1.500h14L9.500 8v6l-3 1V8Z" fill="#ddd" stroke="#a8a8a8" /></Icone></BotaoIcone>
                <BotaoIcone aria-label="Add"><svg width="12" height="12" viewBox="0 0 12 12"><path d="M4 0h4v4h4v4H8v4H4V8H0V4h4Z" fill="#9a9a9a" /></svg></BotaoIcone>
            </Busca>
            <Lista>
                <Item $raiz><IconeItem><Montagem /></IconeItem>FAN.ASM</Item>
                {pecas.map((p) => (
                    <Item key={p.nome}><Abre /><IconeItem><Peca /></IconeItem>{p.marca && <Marca />}{p.nome}</Item>
                ))}
            </Lista>
            <Cabecalho $fim>
                <Seta cor="#808284" w={9} h={7} />
                <h2>Mechanism Tree</h2>
            </Cabecalho>
            <Mecanismos>
                <Lista>
                    <Item $raiz><IconeItem><Mecanismo /></IconeItem>MECHANISM</Item>
                    {mecanismos.map((m) => (
                        <Item key={m.nome}>
                            <Abre>{m.abre && <svg width="8" height="9" viewBox="0 0 8 9"><path d="M0 0L8 4.500L0 9Z" fill="#8a8c8e" /></svg>}</Abre>
                            <IconeItem>{m.icone}</IconeItem>{m.nome}
                        </Item>
                    ))}
                </Lista>
                <Rolagem>
                    <BotaoRolagem aria-label="Scroll up"><svg width="8" height="5" viewBox="0 0 8 5"><path d="M0 5H8L4 0Z" fill="#55585c" /></svg></BotaoRolagem>
                    <Polegar><span /><span /><span /><span /></Polegar>
                    <BotaoRolagem aria-label="Scroll down"><Seta cor="#55585c" w={8} h={5} /></BotaoRolagem>
                </Rolagem>
            </Mecanismos>
        </Painel>
    </Lateral>
);

const FecharX = ({ cor }) => (
    <button type="button" aria-label="Close"><svg width="9" height="8" viewBox="0 0 9 8"><path d="M1 0l7 8M8 0L1 8" stroke={cor} strokeWidth="2.400" /></svg></button>
);

const DialogoServo = () => {
    const [nome, setNome] = useState("ServoMotor2");
    const [entidade, setEntidade] = useState("axis");
    return (
        <Dialogo $top={157} $w={260} $foco>
            <DialogoTitulo><h2>Servo Motor Definition</h2><FecharX cor="#6d6f72" /></DialogoTitulo>
            <Corpo>
                <Quadro>
                    <legend>Name</legend>
                    <Campo aria-label="Name" value={nome} onChange={(e) => setNome(e.target.value)} />
                </Quadro>
                <DialogoAbas>
                    <DialogoAba type="button" $ativa>Type</DialogoAba>
                    <DialogoAba type="button">Profile</DialogoAba>
                </DialogoAbas>
                <DialogoPainel>
                    <Quadro $alto={4}>
                        <legend>Driven Entity</legend>
                        <Opcao><input type="radio" name="entidade" checked={entidade === "axis"} onChange={() => setEntidade("axis")} />Motion Axis</Opcao>
                        <Opcao><input type="radio" name="entidade" checked={entidade === "geo"} onChange={() => setEntidade("geo")} />Geometry</Opcao>
                        <LinhaCampo>
                            <Seletor type="button" aria-label="Pick entity">
                                <svg width="12" height="16" viewBox="0 0 12 16"><path d="M1 0v13l3-3 2 5 3-1-2-5h4Z" fill="#000" stroke="#eee" strokeWidth="0.7" /></svg>
                            </Seletor>
                            <Campo aria-label="Driven entity" readOnly value="" />
                        </LinhaCampo>
                    </Quadro>
                    <Centro><Botao type="button" $w={39}>Flip</Botao></Centro>
                </DialogoPainel>
                <Botoes>
                    <Botao type="button" $padrao>OK</Botao>
                    <Botao type="button">Apply</Botao>
                    <Botao type="button">Cancel</Botao>
                </Botoes>
            </Corpo>
        </Dialogo>
    );
};

const App = () => (
    <>
        <GlobalStyle />
        <Janela>
            <BarraTitulo>
                <BotaoIcone aria-label="Creo">{IconeBarra.creo}</BotaoIcone>
                <Divisor $m={1} />
                <BotaoIcone aria-label="New">{IconeBarra.novo}</BotaoIcone>
                <BotaoIcone aria-label="Open">{IconeBarra.abrir}</BotaoIcone>
                <BotaoIcone aria-label="Save">{IconeBarra.salvar}</BotaoIcone>
                <BotaoIcone aria-label="Undo">{IconeBarra.desfazer}</BotaoIcone>
                <BotaoIcone $w={14} aria-label="Undo list"><Seta cor={cores.cinza} /></BotaoIcone>
                <BotaoIcone aria-label="Redo">{IconeBarra.refazer}</BotaoIcone>
                <BotaoIcone $w={14} aria-label="Redo list"><Seta cor={cores.cinza} /></BotaoIcone>
                <BotaoIcone aria-label="Regenerate">{IconeBarra.regenerar}</BotaoIcone>
                <BotaoIcone aria-label="Windows">{IconeBarra.janelas}</BotaoIcone>
                <BotaoIcone $w={14} aria-label="Window list"><Seta /></BotaoIcone>
                <BotaoIcone aria-label="Close window">{IconeBarra.fechar}</BotaoIcone>
                <Divisor />
                <BotaoIcone aria-label="Customize"><svg width="9" height="7" viewBox="0 0 9 7"><path d="M0 .5h9" stroke="#333" /><path d="M0 3h9L4.500 7Z" fill="#333" /></svg></BotaoIcone>
                <Titulo>FAN (Active) - Creo Parametric 2.0</Titulo>
                <BotaoIcone $w={27} aria-label="Minimize"><Icone s={12} stroke="#b4b4b4"><path d="M1.500 6.500h9v3h-9Z" /></Icone></BotaoIcone>
                <BotaoIcone $w={27} aria-label="Restore"><Icone s={12} stroke="#b4b4b4"><path d="M4.500.5h7v7h-7ZM.5 4.500h7v7h-7ZM2.500 6.500h3v2h-3Z" /></Icone></BotaoIcone>
                <BotaoIcone $w={27} aria-label="Close"><Icone s={12} stroke="#b4b4b4"><path d="M.5 1.500h3L6 4l2.500-2.500h3L8 6l3.500 4.500h-3L6 8l-2.500 2.500h-3L4 6Z" /></Icone></BotaoIcone>
            </BarraTitulo>
            <Abas>
                <AbaArquivo>File<Seta cor="#747679" w={6} /></AbaArquivo>
                <AbaAtiva>Mechanism</AbaAtiva>
                <Conjunto>{abas.map((a) => <Aba key={a}>{a}</Aba>)}</Conjunto>
                <Ajuda>
                    <BotaoIcone $w={20} aria-label="Collapse ribbon"><Icone s={12} stroke="#555"><path d="M1 6l5-4 5 4M1 9l5-4 5 4M1 6v3M11 6v3" /></Icone></BotaoIcone>
                    <BotaoIcone aria-label="Search commands"><Icone s={16} stroke="#3c3c3c"><circle cx="9.500" cy="6.500" r="5" fill="#eef8ff" strokeWidth="2" /><path d="M6 10l-4 5" strokeWidth="3" /></Icone></BotaoIcone>
                    <BotaoIcone aria-label="Learning connector"><Icone s={16}><circle cx="8" cy="8" r="8" fill="#3f3f3f" stroke="none" /><path d="M1 7l7-3 7 3-7 3ZM3 9c1 4 9 4 10 0l-5 2Z" fill="#fff" stroke="none" /></Icone></BotaoIcone>
                    <BotaoIcone $w={14} aria-label="Learning menu"><Seta w={6} /></BotaoIcone>
                    <BotaoIcone aria-label="Help"><Icone s={16}><circle cx="8" cy="8" r="8" fill="#3f3f3f" stroke="none" /><Letra x="4" y="13" fontSize="13" fill="#fff">?</Letra></Icone></BotaoIcone>
                </Ajuda>
            </Abas>
            <FaixaOpcoes />

            <Area>
                <PainelLateral />
                <Vista>
                    <BarraVista>
                        {ferramentasVista.map((f) => (
                            <BotaoVista key={f.nome} aria-label={f.nome} $ativo={f.ativo} $canto={f.canto}>{f.icone}</BotaoVista>
                        ))}
                    </BarraVista>
                    <Modelo />
                </Vista>
            </Area>

            <Status>
                <BotaoStatus $ativo aria-label="Navigator"><Arvore cor="#1d2f5c" /></BotaoStatus>
                <BotaoStatus aria-label="Browser">
                    <Icone s={16}><circle cx="8" cy="8" r="6.500" fill="#28a04c" stroke="#1a6fae" strokeWidth="1.500" /><path d="M5 6c3-3 6-1 6 2H5c0 4 4 4 6 2" stroke="#1c78d4" strokeWidth="2" /><path d="M1 14C0 10 8 2 14 1c2 1 1 3-1 5" stroke="#eec01f" strokeWidth="2" /></Icone>
                </BotaoStatus>
                <Divisor $m={4} />
                <Mensagem>
                    <svg width="12" height="12" viewBox="0 0 12 12"><path d="M1 4h4V1l6 5-6 5V8H1Z" fill="#19e67c" stroke="#111" /></svg>
                    Select a motion axis
                </Mensagem>
                <Divisor $h={30} />
                <Vazio />
                <Divisor $h={30} />
                <Luzes>
                    <svg width="26" height="12" viewBox="0 0 26 12"><circle cx="6" cy="6" r="5" fill="#bfc0c2" /><circle cx="16" cy="6" r="3" fill="#dcdddf" /><circle cx="23" cy="6" r="3" fill="#dcdddf" /></svg>
                </Luzes>
                <Divisor $h={30} />
                <Procurar aria-label="Find"><Binoculo /></Procurar>
                <Divisor $h={30} />
                <Filtro>
                    <select aria-label="Selection filter" defaultValue="All"><option>All</option></select>
                    <span><Seta cor="#4a4c50" w={7} h={5} /></span>
                </Filtro>
            </Status>
            <Tarefas>
                {tarefas.map((t) => (
                    <BotaoTarefa key={t.nome} aria-label={t.nome} $aberto={t.aberto} $verde={t.verde}>{t.icone}</BotaoTarefa>
                ))}
                <PapelParede width="264" height="40" viewBox="0 0 264 40">
                    <defs>
                        <linearGradient id="verde">
                            <stop offset="0" stopColor="#4b6f79" stopOpacity="0.4" /><stop offset="0.3" stopColor="#4b6f79" /><stop offset="0.7" stopColor="#4b6f79" /><stop offset="1" stopColor="#4b6f79" stopOpacity="0.4" />
                        </linearGradient>
                    </defs>
                    <path d="M0 0H262L200 40H55Z" fill="url(#verde)" />
                    <path d="M54 0L108 40" stroke="#567d94" strokeWidth="3" /><path d="M232 0h12l-12 8Z" fill="#275493" />
                </PapelParede>
                <Bandeja>
                    <svg width="8" height="5" viewBox="0 0 8 5"><path d="M0 5H8L4 0Z" fill="#fff" /></svg>
                    <svg width="16" height="18" viewBox="0 0 16 18" fill="none" stroke="#fff" strokeWidth="1.500"><path d="M8.500 3.500h6v13h-6ZM10 1.500h3M4 7v10M2 1v3M6 1v3" /><path d="M1 4h6v3H1ZM10 9h3v6h-3Z" fill="#fff" stroke="none" /></svg>
                    <svg width="16" height="16" viewBox="0 0 16 16" fill="none" stroke="#fff" strokeWidth="1.500"><path d="M6 3.500h9v7H5M10 11v3M6 14.500h9M3 6v8h2M1 1.500h4v4H1Z" /></svg>
                    <svg width="17" height="16" viewBox="0 0 17 16" fill="none" stroke="#fff"><path d="M1 5h3l4-4v14l-4-4H1Z" fill="#fff" /><path d="M10 5c1 2 1 4 0 6M12 3c2 3 2 7 0 10M14 2c3 4 3 8 0 12" /></svg>
                    <Relogio>11:31 AM<br />19-10-2014</Relogio>
                </Bandeja>
            </Tarefas>

            <Dica role="tooltip">
                <DicaTitulo><Espiral s={20} a="#1a5fc8" b="#9bdcfb" />Servo Motors</DicaTitulo>
                <p>Define a servo motor.</p>
            </Dica>
            <DialogoServo />
            <Dialogo $top={477} $w={138}>
                <DialogoTitulo $claro><h2>Select</h2><FecharX cor="#a9a9a9" /></DialogoTitulo>
                <CorpoSelecao>
                    <p>Select 1 item.</p>
                    <BotoesSelecao>
                        <Botao type="button">OK</Botao>
                        <Botao type="button">Cancel</Botao>
                    </BotoesSelecao>
                </CorpoSelecao>
            </Dialogo>
        </Janela>
    </>
);

export default App;
